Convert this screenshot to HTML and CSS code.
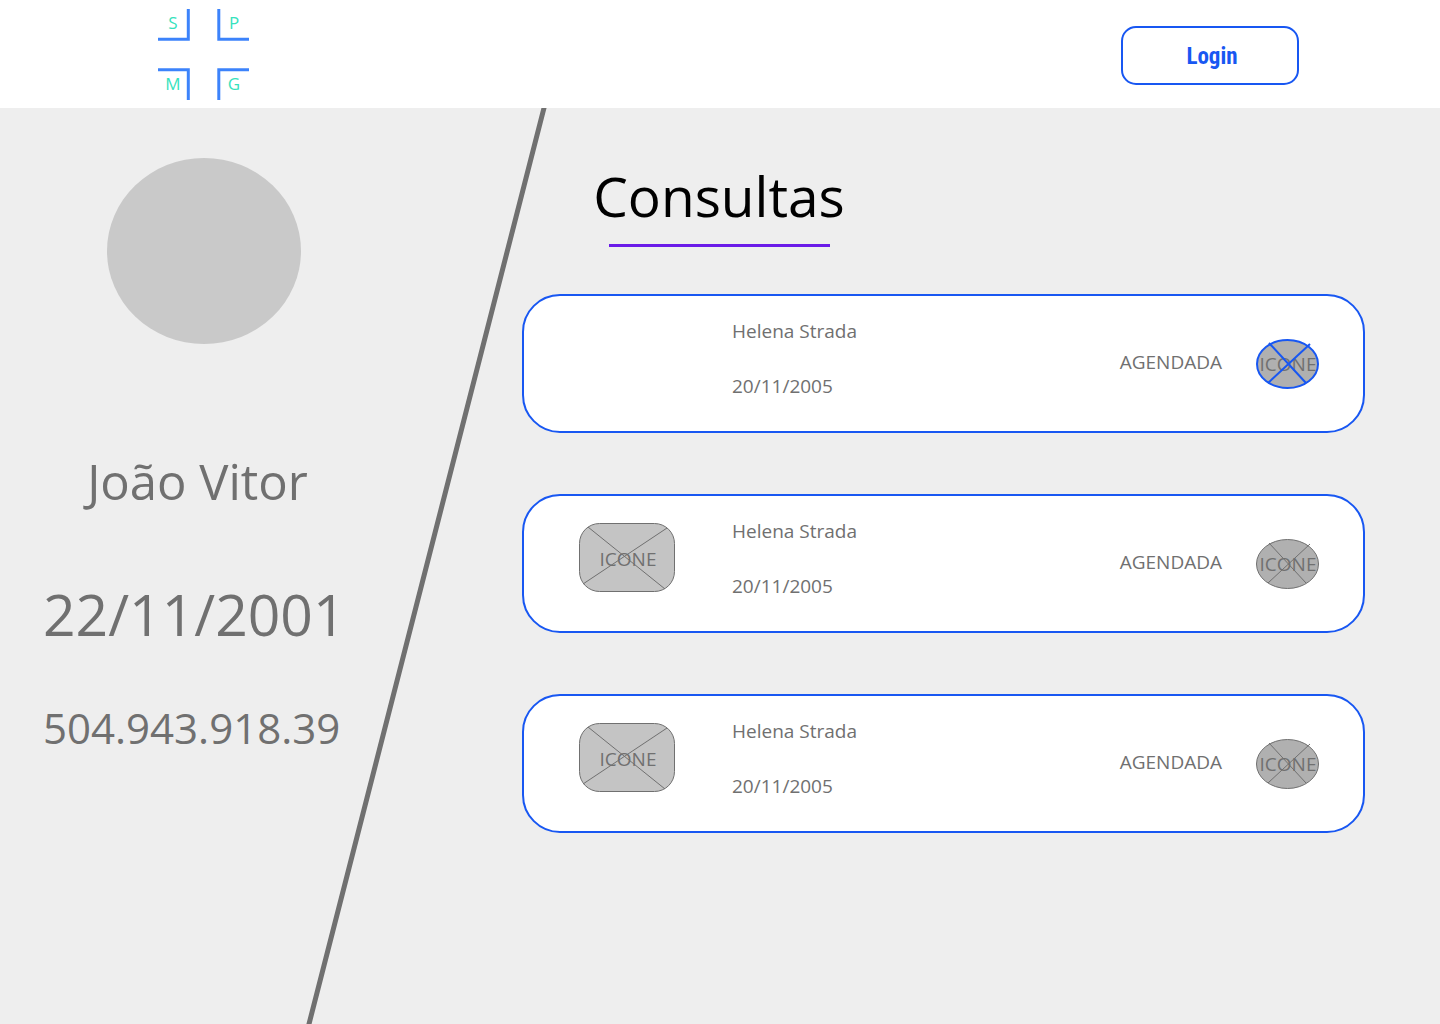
FILE: index.html
```html
<!DOCTYPE html>
<html lang="pt-BR">
<head>
  <meta charset="utf-8">
  <meta name="viewport" content="width=device-width, initial-scale=1">
  <title>Consultas</title>
  <link rel="stylesheet" href="styles.css">
</head>
<body>
  <header class="header">
    <svg class="logo" viewBox="0 0 91 91" preserveAspectRatio="xMidYMin" role="img" aria-label="SPMG">
      <g class="logo-frame">
        <path d="M0 30.3H30.3V0"/>
        <path d="M60.8 0V30.3H91"/>
        <path d="M0 60.8H30.3V91"/>
        <path d="M60.8 91V60.8H91"/>
      </g>
      <g class="logo-letters">
        <text x="15" y="20">S</text>
        <text x="76" y="20">P</text>
        <text x="15" y="81">M</text>
        <text x="76" y="81">G</text>
      </g>
    </svg>
    <button class="login" type="button">Login</button>
  </header>

  <main class="page">
    <svg class="divider" viewBox="0 0 240 916" preserveAspectRatio="none" aria-hidden="true">
      <line x1="239" y1="0" x2="4" y2="916"/>
    </svg>

    <section class="profile">
      <div class="avatar"></div>
      <div class="details">
        <p class="name">João Vitor</p>
        <p class="birth">22/11/2001</p>
        <p class="cpf">504.943.918.39</p>
      </div>
    </section>

    <section class="appointments">
      <h1 class="title">Consultas</h1>
      <ul class="list">
        <li class="card">
          <div class="card-info">
            <div class="thumb"></div>
            <div class="card-text">
              <p>Helena Strada</p>
              <p>20/11/2005</p>
            </div>
          </div>
          <div class="card-status">
            <span class="status-label">AGENDADA</span>
            <button class="action action-active" type="button">
              <svg viewBox="0 0 63 50">
                <ellipse cx="31.5" cy="25" rx="30.5" ry="24"/>
                <text x="32" y="32">ICONE</text>
                <path d="M13 4L50 44M54 5L12 44"/>
              </svg>
            </button>
          </div>
        </li>
        <li class="card">
          <div class="card-info">
            <svg class="thumb" viewBox="0 0 96 69">
              <rect x="0.5" y="0.5" width="95" height="68" rx="20"/>
              <text x="49" y="43">ICONE</text>
              <path d="M9 4L86 66M88 5L4 61"/>
            </svg>
            <div class="card-text">
              <p>Helena Strada</p>
              <p>20/11/2005</p>
            </div>
          </div>
          <div class="card-status">
            <span class="status-label">AGENDADA</span>
            <button class="action" type="button">
              <svg viewBox="0 0 63 50">
                <ellipse cx="31.5" cy="25" rx="31" ry="24.5"/>
                <text x="32" y="32">ICONE</text>
                <path d="M13 4L50 44M54 5L12 44"/>
              </svg>
            </button>
          </div>
        </li>
        <li class="card">
          <div class="card-info">
            <svg class="thumb" viewBox="0 0 96 69">
              <rect x="0.5" y="0.5" width="95" height="68" rx="20"/>
              <text x="49" y="43">ICONE</text>
              <path d="M9 4L86 66M88 5L4 61"/>
            </svg>
            <div class="card-text">
              <p>Helena Strada</p>
              <p>20/11/2005</p>
            </div>
          </div>
          <div class="card-status">
            <span class="status-label">AGENDADA</span>
            <button class="action" type="button">
              <svg viewBox="0 0 63 50">
                <ellipse cx="31.5" cy="25" rx="31" ry="24.5"/>
                <text x="32" y="32">ICONE</text>
                <path d="M13 4L50 44M54 5L12 44"/>
              </svg>
            </button>
          </div>
        </li>
      </ul>
    </section>
  </main>
</body>
</html>
```
FILE: styles.css
```css
:root {
  --blue: #1857f2;
  --gray: #707070;
  --surface: #eeeeee;
}

* {
  box-sizing: border-box;
}

body {
  display: flex;
  flex-direction: column;
  min-height: 100vh;
  margin: 0;
  background: var(--surface);
  color: var(--gray);
  font: 19px/27px "Open Sans", "Noto Sans", sans-serif;
}

p,
h1,
ul {
  margin: 0;
  padding: 0;
}

.header {
  display: flex;
  align-items: center;
  justify-content: space-between;
  padding: 9px 141px 7px 158px;
  background: #ffffff;
}

.logo {
  width: 91px;
  height: 92px;
}

.logo-frame {
  fill: none;
  stroke: #3c83fb;
  stroke-width: 3;
}

.logo-letters {
  fill: #36e2bd;
  font-size: 17px;
  text-anchor: middle;
}

.login {
  width: 178px;
  height: 59px;
  padding: 4px 0 0 4px;
  border: 2px solid var(--blue);
  border-radius: 15px;
  background: #ffffff;
  color: var(--blue);
  font: 700 23px/28px "Roboto Condensed", Roboto, sans-serif;
}

.page {
  position: relative;
  display: grid;
  grid-template-columns: 408px 1fr;
  column-gap: 114px;
  flex: 1;
  padding: 50px 75px 50px 0;
}

.divider {
  position: absolute;
  top: 0;
  left: 305px;
  width: 240px;
  height: 100%;
  overflow: visible;
  clip-path: inset(0 -10px);
}

.divider line {
  stroke: var(--gray);
  stroke-width: 5;
  stroke-linecap: square;
  vector-effect: non-scaling-stroke;
}

.avatar {
  width: 194px;
  height: 186px;
  margin: 0 auto 104px;
  border-radius: 50%;
  background: #c9c9c9;
}

.details {
  width: 352px;
  padding-left: 43px;
}

.name {
  margin-bottom: 62px;
  font-size: 49px;
  line-height: 66px;
  text-align: center;
}

.birth {
  margin-bottom: 47px;
  font-size: 57px;
  line-height: 76px;
}

.cpf {
  font-size: 42px;
  line-height: 58px;
}

.title {
  display: flex;
  flex-direction: column;
  align-items: center;
  gap: 10px;
  width: 250px;
  margin: 0 0 47px 72px;
  color: #000000;
  font-size: 55px;
  font-weight: 400;
  line-height: 76px;
}

.title::after {
  content: "";
  width: 221px;
  height: 3px;
  background: #6a1be8;
}

.list {
  display: flex;
  flex-direction: column;
  gap: 61px;
  list-style: none;
}

.card {
  display: flex;
  align-items: center;
  justify-content: space-between;
  height: 139px;
  padding: 0 44px 0 55px;
  border: 2px solid var(--blue);
  border-radius: 38px;
  background: #ffffff;
}

.card-info {
  display: flex;
  align-items: center;
  gap: 57px;
  padding-bottom: 12px;
}

.card-text {
  display: grid;
  gap: 28px;
  padding-top: 3px;
}

.card-status {
  display: flex;
  align-items: center;
  gap: 34px;
}

.status-label {
  padding-bottom: 2px;
}

.thumb {
  width: 96px;
  height: 69px;
}

.thumb rect {
  fill: #c4c4c4;
  stroke: var(--gray);
}

.action {
  width: 63px;
  height: 50px;
  padding: 0;
  border: 0;
  background: none;
  font: inherit;
}

.action svg {
  display: block;
  width: 63px;
  height: 50px;
}

.action ellipse {
  fill: #b0b0b0;
  stroke: var(--gray);
}

.card path {
  fill: none;
  stroke: var(--gray);
}

.card text {
  fill: var(--gray);
  text-anchor: middle;
}

.action-active ellipse,
.action-active path {
  stroke: var(--blue);
  stroke-width: 2;
}
```
